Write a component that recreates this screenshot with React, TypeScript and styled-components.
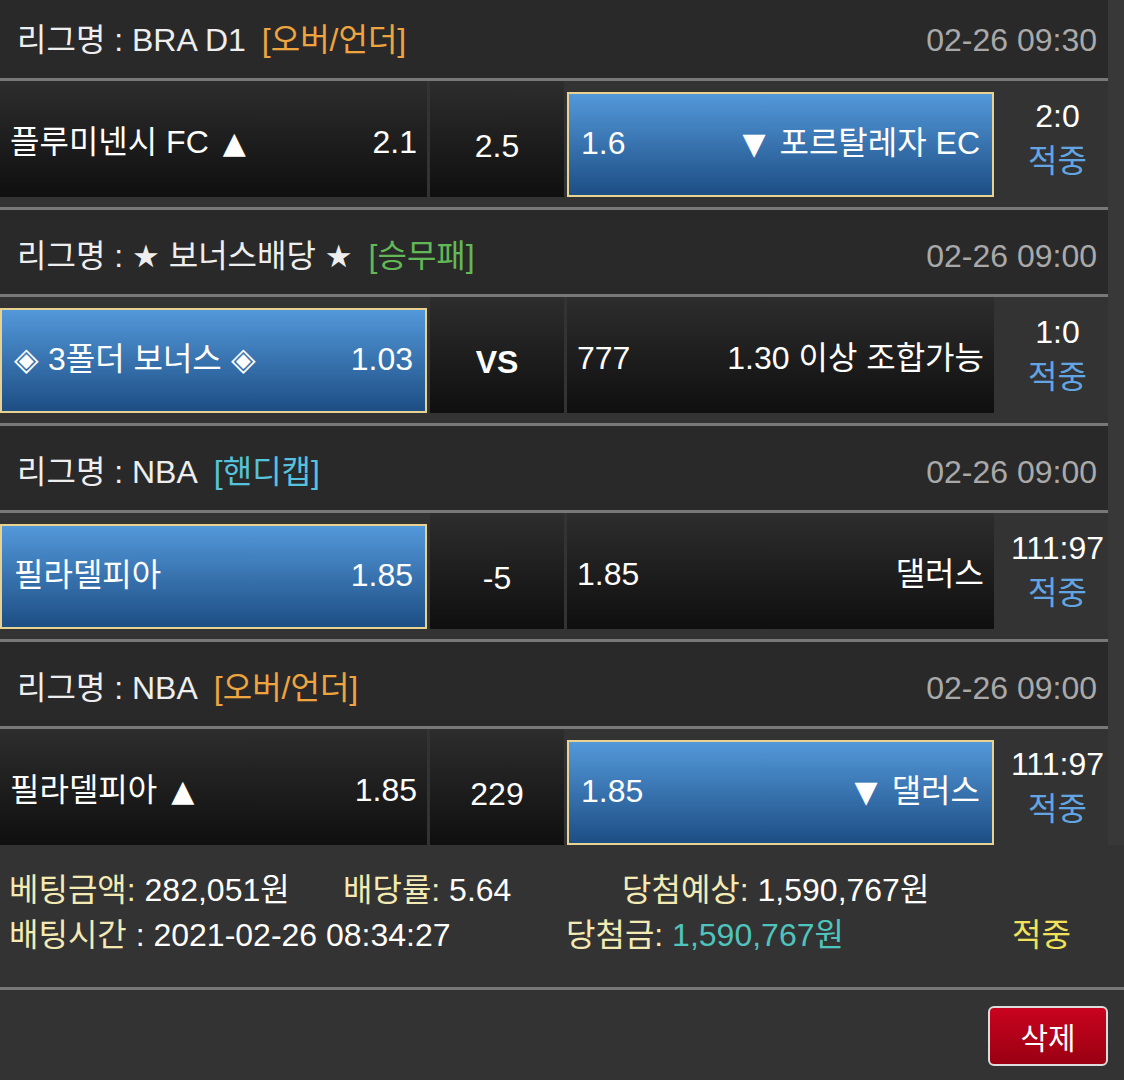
import React from "react";
import styled, { createGlobalStyle } from "styled-components";

const Global = createGlobalStyle`
  html, body { margin: 0; padding: 0; background: #383838; }
  body { font-family: "Liberation Sans", "Noto Sans CJK KR", sans-serif; }
`;

const Page = styled.div`
  width: 1124px;
  height: 1080px;
  overflow: hidden;
  background: #383838;
`;

const Board = styled.div`
  width: 1108px;
  margin-top: -6px;
  background: #333333;
`;

const Block = styled.section<{ $last?: boolean }>`
  padding-bottom: ${(p) => (p.$last ? "0" : "10px")};
  border-bottom: ${(p) => (p.$last ? "none" : "3px solid #787878")};
`;

const Header = styled.div`
  height: 77px;
  padding: 7px 11px 0 17px;
  display: flex;
  align-items: center;
  justify-content: space-between;
  background: #292929;
  border-bottom: 3px solid #787878;
  font-size: 32px;
  line-height: 40px;
  color: #eeeeee;
  white-space: nowrap;
`;

const League = styled.div`
  display: flex;
  align-items: center;
`;

const Star = styled.span`
  font-family: "DejaVu Sans", sans-serif;
  font-size: 31px;
`;

const Tag = styled.span<{ $color: string }>`
  margin-left: 16px;
  color: ${(p) => p.$color};
`;

const Time = styled.span`
  color: #a9a9a9;
`;

const Row = styled.div`
  display: flex;
  height: 116px;
  gap: 3px;
  background: #333333;
`;

const Cell = styled.div<{ $selected?: boolean; $w: number }>`
  box-sizing: border-box;
  width: ${(p) => p.$w}px;
  flex: none;
  display: flex;
  align-items: center;
  justify-content: space-between;
  font-size: 32px;
  line-height: 40px;
  color: #ffffff;
  white-space: nowrap;
  ${(p) =>
    p.$selected
      ? `
    margin-top: 11px;
    padding: 0 12px 4px 12px;
    background: linear-gradient(#5398da, #1d4e84);
    border: 2px solid #e8d291;
  `
      : `
    padding: 6px 10px 0 10px;
    background: linear-gradient(#2d2d2d, #0f0f0f);
  `}
`;

const Text = styled.span`
  display: block;
  height: 40px;
`;

const Arrow = styled.span`
  font-family: "DejaVu Sans", sans-serif;
  font-size: 30px;
  margin: 0 14px;
`;

const Mid = styled.div<{ $bold?: boolean }>`
  box-sizing: border-box;
  width: 134px;
  flex: none;
  display: flex;
  align-items: center;
  justify-content: center;
  padding-top: 14px;
  background: linear-gradient(#2d2d2d, #0f0f0f);
  font-size: 32px;
  line-height: 40px;
  font-weight: ${(p) => (p.$bold ? 700 : 400)};
  color: #ffffff;
`;

const Score = styled.div`
  flex: 1;
  display: flex;
  flex-direction: column;
  align-items: center;
  justify-content: center;
  padding-left: 10px;
  font-size: 32px;
  line-height: 45px;
  color: #ffffff;
`;

const Hit = styled.span`
  color: #62a5e2;
`;

const Summary = styled.div`
  padding: 23px 0 29px 9px;
  font-size: 32px;
  line-height: 45px;
  color: #ffffff;
  border-bottom: 3px solid #787878;
  background: #333333;
  white-space: nowrap;
`;

const SumLine = styled.div`
  display: flex;
`;

const SumItem = styled.div<{ $w?: number }>`
  width: ${(p) => (p.$w ? `${p.$w}px` : "auto")};
  flex: none;
`;

const Label = styled.span`
  color: #f3eab4;
`;

const Teal = styled.span`
  color: #4fc4bd;
`;

const Yellow = styled.span`
  color: #f1e25a;
`;

const Footer = styled.div`
  display: flex;
  justify-content: flex-end;
  padding: 16px 16px 0 0;
  background: #333333;
  height: 74px;
`;

const DeleteButton = styled.button`
  width: 120px;
  height: 60px;
  border: 2px solid #dcdcdc;
  border-radius: 6px;
  background: linear-gradient(#c9031f, #9a0012);
  color: #ffffff;
  font-family: "Liberation Sans", "Noto Sans CJK KR", sans-serif;
  font-size: 30px;
  padding: 0;
`;

type Side = { left: React.ReactNode; right: React.ReactNode; selected?: boolean };
type Game = {
  league: React.ReactNode;
  tag: string;
  tagColor: string;
  time: string;
  home: Side;
  mid: string;
  midBold?: boolean;
  away: Side;
  score: string;
};

const games: Game[] = [
  {
    league: "리그명 : BRA D1",
    tag: "[오버/언더]",
    tagColor: "#eea43f",
    time: "02-26 09:30",
    home: {
      left: (
        <>
          플루미넨시 FC<Arrow>▲</Arrow>
        </>
      ),
      right: "2.1",
    },
    mid: "2.5",
    away: {
      left: "1.6",
      right: (
        <>
          <Arrow>▼</Arrow>포르탈레자 EC
        </>
      ),
      selected: true,
    },
    score: "2:0",
  },
  {
    league: (
      <>
        리그명 : <Star>★</Star> 보너스배당 <Star>★</Star>
      </>
    ),
    tag: "[승무패]",
    tagColor: "#62b856",
    time: "02-26 09:00",
    home: { left: "◈ 3폴더 보너스 ◈", right: "1.03", selected: true },
    mid: "VS",
    midBold: true,
    away: { left: "777", right: "1.30 이상 조합가능" },
    score: "1:0",
  },
  {
    league: "리그명 : NBA",
    tag: "[핸디캡]",
    tagColor: "#55c2de",
    time: "02-26 09:00",
    home: { left: "필라델피아", right: "1.85", selected: true },
    mid: "-5",
    away: { left: "1.85", right: "댈러스" },
    score: "111:97",
  },
  {
    league: "리그명 : NBA",
    tag: "[오버/언더]",
    tagColor: "#eea43f",
    time: "02-26 09:00",
    home: {
      left: (
        <>
          필라델피아<Arrow>▲</Arrow>
        </>
      ),
      right: "1.85",
    },
    mid: "229",
    away: {
      left: "1.85",
      right: (
        <>
          <Arrow>▼</Arrow>댈러스
        </>
      ),
      selected: true,
    },
    score: "111:97",
  },
];

export default function App() {
  return (
    <Page>
      <Global />
      <Board>
        {games.map((g, i) => (
          <Block key={i} $last={i === games.length - 1}>
            <Header>
              <League>
                <span>{g.league}</span>
                <Tag $color={g.tagColor}>{g.tag}</Tag>
              </League>
              <Time>{g.time}</Time>
            </Header>
            <Row>
              <Cell $w={427} $selected={g.home.selected}>
                <Text>{g.home.left}</Text>
                <Text>{g.home.right}</Text>
              </Cell>
              <Mid $bold={g.midBold}>{g.mid}</Mid>
              <Cell $w={427} $selected={g.away.selected}>
                <Text>{g.away.left}</Text>
                <Text>{g.away.right}</Text>
              </Cell>
              <Score>
                <span>{g.score}</span>
                <Hit>적중</Hit>
              </Score>
            </Row>
          </Block>
        ))}
      </Board>
      <Summary>
        <SumLine>
          <SumItem $w={334}>
            <Label>베팅금액:</Label> 282,051원
          </SumItem>
          <SumItem $w={279}>
            <Label>배당률:</Label> 5.64
          </SumItem>
          <SumItem>
            <Label>당첨예상:</Label> 1,590,767원
          </SumItem>
        </SumLine>
        <SumLine>
          <SumItem $w={557}>
            <Label>배팅시간</Label> : 2021-02-26 08:34:27
          </SumItem>
          <SumItem $w={446}>
            <Label>당첨금:</Label> <Teal>1,590,767원</Teal>
          </SumItem>
          <SumItem>
            <Yellow>적중</Yellow>
          </SumItem>
        </SumLine>
      </Summary>
      <Footer>
        <DeleteButton>삭제</DeleteButton>
      </Footer>
    </Page>
  );
}
